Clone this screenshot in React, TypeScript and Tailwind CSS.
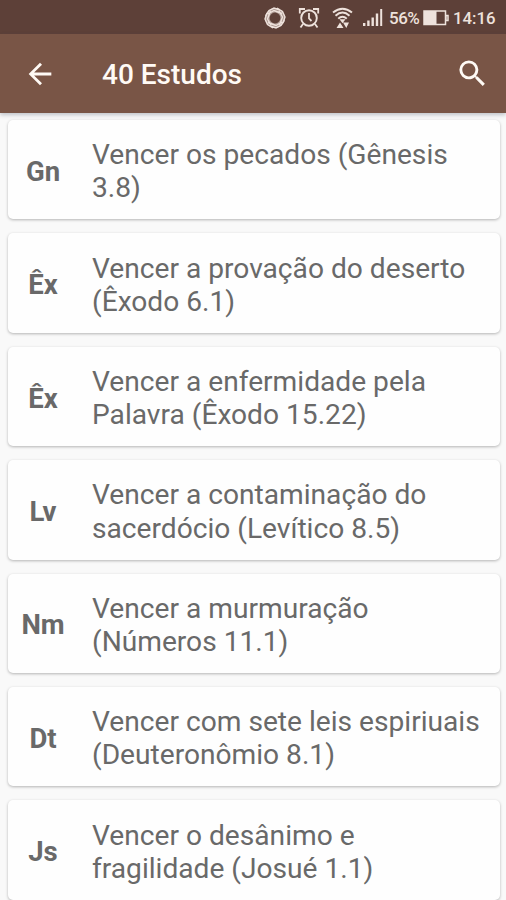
import React from 'react';
import { MdArrowBack, MdSearch } from 'react-icons/md';

const studies = [
    { book: 'Gn', lines: ['Vencer os pecados (Gênesis', '3.8)'] },
    { book: 'Êx', lines: ['Vencer a provação do deserto', '(Êxodo 6.1)'] },
    { book: 'Êx', lines: ['Vencer a enfermidade pela', 'Palavra (Êxodo 15.22)'] },
    { book: 'Lv', lines: ['Vencer a contaminação do', 'sacerdócio (Levítico 8.5)'] },
    { book: 'Nm', lines: ['Vencer a murmuração', '(Números 11.1)'] },
    { book: 'Dt', lines: ['Vencer com sete leis espiriuais', '(Deuteronômio 8.1)'] },
    { book: 'Js', lines: ['Vencer o desânimo e', 'fragilidade (Josué 1.1)'] },
];

function StatusBar() {
    return (
        <div className="flex h-[34px] shrink-0 items-center bg-[#5d4038] pt-px pl-[264px] text-[#eee2dc]">
            {/* Interlaced ring */}
            <svg className="h-[22px] w-[22px] shrink-0" viewBox="0 0 22 22" fill="none" stroke="currentColor">
                <circle cx="11" cy="11" r="7.7" strokeWidth="4.600" strokeOpacity="0.55" />
                <path
                    d="M1.500 9L5 3.500 10 1l6 2M4 7l6-3.500L18 6.500M13 1l5.500 3.500L21 10l-2 6M15 4l3.500 6-3 8M20.500 13L17 18.500 12 21l-6-2M18 15l-6 3.500L4 15.500M9 21l-5.500-3.500L1 12l2-6M7 18l-3.500-6 3-8"
                    strokeWidth="1.400"
                />
            </svg>
            {/* Alarm */}
            <svg className="ml-3 h-[22px] w-[22px] shrink-0" viewBox="0 0 22 22" fill="none" stroke="currentColor">
                <circle cx="11" cy="11" r="7.8" strokeWidth="1.900" />
                <path d="M11 6v5.500l2.500 2.500M5 17l-2.500 3.500M17 17l2.500 3.500M1.800 6.500V2H7M15 2h5.200v4.500" strokeWidth="1.800" />
            </svg>
            {/* Wi-Fi with traffic arrows */}
            <svg className="ml-3 h-[22px] w-[22px] shrink-0" viewBox="0 0 22 22" fill="none" stroke="currentColor">
                <path d="M1 5.500Q10.500-2 20 5.500M3.500 8.700Q10.500 2.500 17.500 8.700M6.200 11.600Q10.500 7.800 14.800 11.600" strokeWidth="1.900" />
                <path d="M7.500 12.300h6l-3 4zM4.500 21l3.500-5.500 3.500 5.500zM11 15.500h6l-2.700 5.500z" fill="currentColor" stroke="none" />
            </svg>
            {/* Mobile signal */}
            <svg className="ml-[9px] h-[19px] w-5 shrink-0" viewBox="0 0 20 19" fill="currentColor">
                <path d="M0 15h2.400v3H0zM4.200 12.500h2.400V18H4.200zM8.500 9.500h2.400V18H8.500zM12.800 5.500h2.400V18h-2.400zM17.200 1h2v17h-2z" />
            </svg>
            <span className="ml-[6px] w-[31px] shrink-0 pt-[2px] text-[17px] font-medium tracking-[-0.5px] whitespace-nowrap">56%</span>
            <svg className="ml-[3px] h-4 w-[26px] shrink-0" viewBox="0 0 26 16">
                <path d="M1 1h21.500v13.500H1zM23 5.500h2v5h-2z" fill="none" stroke="currentColor" strokeWidth="1.500" />
                <path d="M1 1h12.500v13.500H1z" fill="currentColor" />
            </svg>
            <span className="ml-[4px] pt-[2px] text-[16.800px] font-medium whitespace-nowrap">14:16</span>
        </div>
    );
}

export default function App() {
    return (
        <div className="flex h-[900px] w-[506px] flex-col overflow-hidden bg-[#f9f9f9] font-['Roboto',sans-serif]">
            <StatusBar />

            {/* Toolbar */}
            <header className="relative z-10 flex h-[79px] shrink-0 items-center bg-[#795546] pr-4 pl-[23px] text-[#fffaf5] shadow-[0_2px_4px_rgba(60,70,90,0.3)]">
                <MdArrowBack className="h-[34px] w-[34px]" />
                <h1 className="ml-[45px] flex-1 pt-[3px] text-[28px] leading-none font-medium">40 Estudos</h1>
                <MdSearch className="h-[35px] w-[35px]" />
            </header>

            {/* Studies */}
            <main className="flex flex-col gap-[14px] pt-[7px] pr-[6px] pl-2">
                {studies.map((study, i) => (
                    <div
                        key={i}
                        className="flex h-[99.4px] shrink-0 items-center rounded-[5px] bg-[#fefefe] pt-[3.400px] text-[#696969] shadow-[0_1px_3px_rgba(0,0,0,0.28)]"
                    >
                        <div className="w-[70px] text-center text-[27.500px] font-bold">{study.book}</div>
                        <div className="ml-[14px] text-[28.150px] leading-[33.200px] whitespace-nowrap">
                            {study.lines.map((line) => (
                                <div key={line}>{line}</div>
                            ))}
                        </div>
                    </div>
                ))}
            </main>
        </div>
    );
}
